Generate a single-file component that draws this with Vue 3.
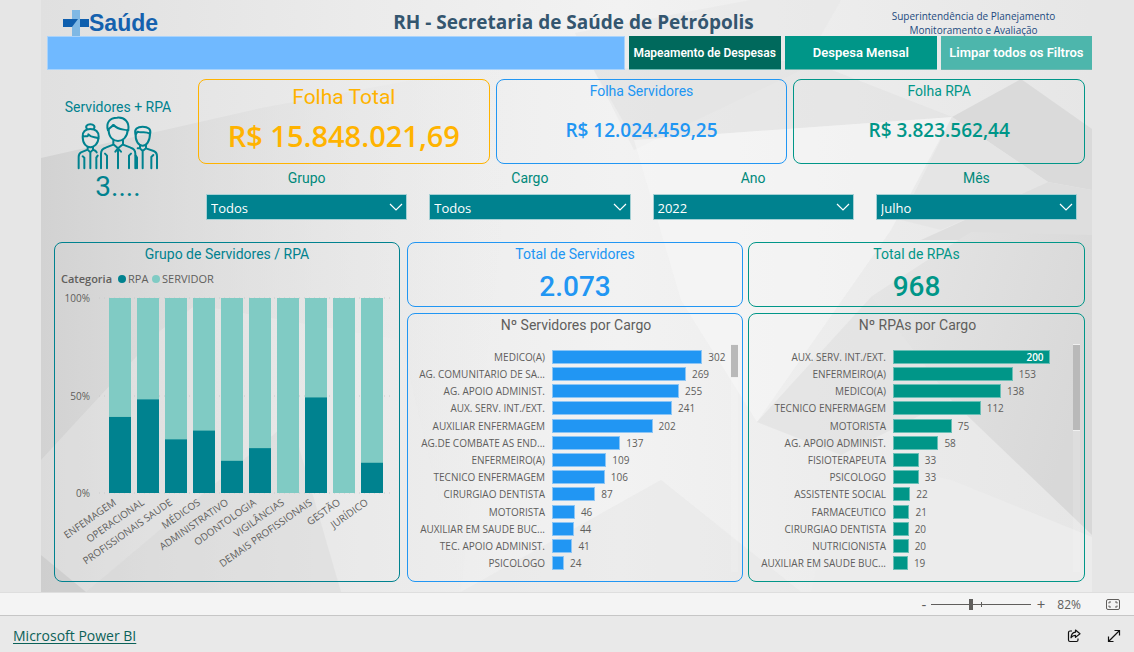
<script setup>
import { ref } from 'vue'

const payroll = [
  { title: 'Folha Total', value: 'R$ 15.848.021,69', tone: 'amber' },
  { title: 'Folha Servidores', value: 'R$ 12.024.459,25', tone: 'blue' },
  { title: 'Folha RPA', value: 'R$ 3.823.562,44', tone: 'green' },
]

const filters = ref([
  { id: 'grupo', label: 'Grupo', value: 'Todos' },
  { id: 'cargo', label: 'Cargo', value: 'Todos' },
  { id: 'ano', label: 'Ano', value: '2022' },
  { id: 'mes', label: 'Mês', value: 'Julho' },
])

const groups = [
  { name: 'ENFEMAGEM', rpa: 39 },
  { name: 'OPERACIONAL', rpa: 48 },
  { name: 'PROFISSIONAIS SAUDE', rpa: 27.5 },
  { name: 'MÉDICOS', rpa: 32 },
  { name: 'ADMINISTRATIVO', rpa: 16.5 },
  { name: 'ODONTOLOGIA', rpa: 23 },
  { name: 'VIGILÂNCIAS', rpa: 0 },
  { name: 'DEMAIS PROFISSIONAIS', rpa: 49 },
  { name: 'GESTÃO', rpa: 0 },
  { name: 'JURÍDICO', rpa: 15.5 },
]
const axis = [
  { label: '100%', y: 55 },
  { label: '50%', y: 153 },
  { label: '0%', y: 250 },
]
const barX = (i) => 54 + i * 28
const barH = (pct) => pct * 1.95

const roles = [
  {
    title: 'Nº Servidores por Cargo',
    totalTitle: 'Total de Servidores',
    total: '2.073',
    tone: 'blue',
    scale: 84 / 302,
    thumb: 'short',
    rows: [
      ['MEDICO(A)', 302], ['AG. COMUNITARIO DE SA...', 269], ['AG. APOIO ADMINIST.', 255],
      ['AUX. SERV. INT./EXT.', 241], ['AUXILIAR ENFERMAGEM', 202], ['AG.DE COMBATE AS END...', 137],
      ['ENFERMEIRO(A)', 109], ['TECNICO ENFERMAGEM', 106], ['CIRURGIAO DENTISTA', 87],
      ['MOTORISTA', 46], ['AUXILIAR EM SAUDE BUC...', 44], ['TEC. APOIO ADMINIST.', 41], ['PSICOLOGO', 24],
    ],
  },
  {
    title: 'Nº RPAs por Cargo',
    totalTitle: 'Total de RPAs',
    total: '968',
    tone: 'green',
    scale: 87 / 200,
    thumb: 'long',
    rows: [
      ['AUX. SERV. INT./EXT.', 200], ['ENFERMEIRO(A)', 153], ['MEDICO(A)', 138],
      ['TECNICO ENFERMAGEM', 112], ['MOTORISTA', 75], ['AG. APOIO ADMINIST.', 58],
      ['FISIOTERAPEUTA', 33], ['PSICOLOGO', 33], ['ASSISTENTE SOCIAL', 22],
      ['FARMACEUTICO', 21], ['CIRURGIAO DENTISTA', 20], ['NUTRICIONISTA', 20], ['AUXILIAR EM SAUDE BUC...', 19],
    ],
  },
]
const isInside = (c, v) => v * c.scale > 85
const zoom = ref(82)
</script>

<template>
  <div class="page">
    <main class="report">
      <svg class="backdrop" viewBox="0 0 1051 592" preserveAspectRatio="none" aria-hidden="true">
        <defs>
          <linearGradient id="base" x1="0" x2="1" y1="0" y2="0">
            <stop offset="0" stop-color="#e0e0e0" />
            <stop offset="0.3" stop-color="#ebebeb" />
            <stop offset="0.55" stop-color="#f2f2f2" />
            <stop offset="1" stop-color="#e6e6e6" />
          </linearGradient>
          <linearGradient id="shade" x1="0" x2="1" y1="0" y2="0">
            <stop offset="0" stop-color="#d2d2d2" />
            <stop offset="1" stop-color="#eaeaea" stop-opacity="0" />
          </linearGradient>
          <linearGradient id="shadeRight" x1="0" x2="1" y1="0" y2="0.4">
            <stop offset="0" stop-color="#e6e6e6" />
            <stop offset="1" stop-color="#d8d8d8" />
          </linearGradient>
        </defs>
        <rect width="1051" height="592" fill="url(#base)" />
        <path d="M0 158 220 108 480 60 420 592H0Z" fill="url(#shade)" />
        <path d="M0 460 120 330 155 305 360 340 420 592H0Z" fill="#eeeeee" opacity="0.35" />
        <path d="M0 555 45 592H0Z" fill="#bbbbbb" opacity="0.4" />
        <path d="M45 592 250 420 300 592Z" fill="#d2d2d2" opacity="0.3" />
        <path d="M534 33 710 0 800 0 760 70 593 150Z" fill="#e6e6e6" opacity="0.5" />
        <path d="M553 70 765 60 911 117 593 140Z" fill="#e0e0e0" opacity="0.5" />
        <path d="M593 140 911 117 850 230 716 422 640 300Z" fill="#f7f7f7" opacity="0.6" />
        <path d="M911 117 980 79 1051 129V190L1007 182Z" fill="#dadada" />
        <path d="M911 117 1007 182 900 230 860 220Z" fill="#e5e5e5" />
        <path d="M1007 182 1051 190V240L880 240Z" fill="#dedede" />
        <path d="M831 296 930 232 1051 235V535L910 400Z" fill="url(#shadeRight)" />
        <path d="M716 422 831 296 910 400 800 455Z" fill="#e0e0e0" opacity="0.6" />
        <path d="M800 455 910 480 1051 537V592H770Z" fill="#ececec" />
        <path d="M420 592 620 480 760 592Z" fill="#e6e6e6" opacity="0.5" />
      </svg>

      <div class="content">
        <header class="top">
          <div class="logo">
            <svg viewBox="0 0 26 26" aria-hidden="true">
              <path d="M9 0h8v26H9z" fill="#7fb8e4" />
              <path d="M0 9h15l-6 8H0zM17 9h9v8h-9z" fill="#0f5fae" />
            </svg>
            <span>Saúde</span>
          </div>
          <h1>RH - Secretaria de Saúde de Petrópolis</h1>
          <p>Superintendência de Planejamento<br />Monitoramento e Avaliação</p>
        </header>

        <nav class="nav">
          <div class="strip"></div>
          <button type="button" class="tab dark">Mapeamento de Despesas</button>
          <button type="button" class="tab">Despesa Mensal</button>
          <button type="button" class="tab light">Limpar todos os Filtros</button>
        </nav>

        <div class="body">
          <section class="summary">
            <div class="people">
              <h2>Servidores + RPA</h2>
              <svg viewBox="50 64 246 160" fill="none" stroke="#00828f" stroke-width="6" stroke-linecap="round" stroke-linejoin="round" aria-hidden="true">
                <path d="M145 105C145 128 160 138 173 138S201 128 202 105" />
                <path d="M143 106C136 84 148 68 170 68C192 66 208 80 204 106M143 106C145 98 152 100 158 90M160 90C172 104 184 102 202 106" />
                <path d="M159 136V148L173 160 188 148V136M159 148 173 160 165 170M188 148 173 160 182 170M173 162V220" />
                <path d="M122 220V176Q122 162 136 158L159 149M225 220V176Q225 162 211 158L188 149M140 220V182L134 176M206 220V182L212 176" />
                <path d="M67 125C67 148 80 157 90 157S114 148 115 125C115 110 105 102 90 102S66 110 67 125C76 122 84 128 84 118C94 130 104 124 115 130" />
                <path d="M80 102C74 94 80 88 90 88S106 94 100 102" />
                <path d="M82 157V164L90 172 98 164V157M90 172V220M82 164 62 172Q55 176 55 186V220M98 164 106 168 109 172M72 220V188L67 184M108 220V188L112 182" />
                <path d="M226 115C224 140 236 152 247 152S269 140 269 115" />
                <path d="M226 118C220 102 232 95 247 95S274 102 269 118M226 118 232 110C242 116 250 106 269 116" />
                <path d="M239 151V160L247 168 257 160V151M247 168V220M257 160 280 168Q290 172 290 184V220M239 160 232 160M273 220V186L279 180M230 220V188L226 182" />
              </svg>
              <strong>3....</strong>
            </div>

            <div class="kpis">
              <article v-for="(k, i) in payroll" :key="k.title" class="card kpi" :class="[k.tone, { major: i === 0 }]">
                <h2>{{ k.title }}</h2>
                <strong>{{ k.value }}</strong>
              </article>
            </div>

            <form class="filters">
              <div v-for="f in filters" :key="f.id" class="filter">
                <label :for="f.id">{{ f.label }}</label>
                <div class="select">
                  <select :id="f.id" v-model="f.value">
                    <option>{{ f.value }}</option>
                  </select>
                  <svg viewBox="0 0 14 8" aria-hidden="true"><path d="M1 1 7 7 13 1" fill="none" stroke="#fff" stroke-width="1.2" /></svg>
                </div>
              </div>
            </form>
          </section>

          <section class="charts">
            <article class="card teal stacked">
              <h2>Grupo de Servidores / RPA</h2>
              <svg viewBox="0 0 344 315" role="img" aria-label="Grupo de Servidores / RPA">
                <g class="legend">
                  <text x="6" y="17" class="strong">Categoria</text>
                  <circle cx="67" cy="13" r="4" fill="#00828f" />
                  <text x="73" y="17">RPA</text>
                  <circle cx="101" cy="13" r="4" fill="#80cbc4" />
                  <text x="107" y="17">SERVIDOR</text>
                </g>
                <g transform="translate(0 -23)">
                  <g v-for="a in axis" :key="a.label">
                    <line x1="44" x2="336" :y1="a.y" :y2="a.y" stroke="#cacaca" stroke-dasharray="1 4" />
                    <text x="35" :y="a.y + 4" class="tick" text-anchor="end">{{ a.label }}</text>
                  </g>
                  <g v-for="(g, i) in groups" :key="g.name">
                    <rect :x="barX(i)" y="55" width="22" height="195" fill="#80cbc4" />
                    <rect :x="barX(i)" :y="250 - barH(g.rpa)" width="22" :height="barH(g.rpa)" fill="#00828f" />
                    <text class="tick" text-anchor="end" :transform="`translate(${barX(i) + 8} 261) rotate(-35)`">{{ g.name }}</text>
                  </g>
                </g>
              </svg>
            </article>

            <div v-for="c in roles" :key="c.title" class="column">
              <article class="card total" :class="c.tone">
                <h2>{{ c.totalTitle }}</h2>
                <strong>{{ c.total }}</strong>
              </article>
              <article class="card ranking" :class="c.tone">
                <h2>{{ c.title }}</h2>
                <div class="plot">
                  <ul>
                    <li v-for="[name, v] in c.rows" :key="name">
                      <span class="name">{{ name }}</span>
                      <span class="track">
                        <span class="bar" :style="{ width: v * c.scale + '%' }"><b v-if="isInside(c, v)">{{ v }}</b></span>
                        <span v-if="!isInside(c, v)">{{ v }}</span>
                      </span>
                    </li>
                  </ul>
                  <div class="scroll"><div class="thumb" :class="c.thumb"></div></div>
                </div>
              </article>
            </div>
          </section>
        </div>
      </div>
    </main>

    <div class="zoombar">
      <button type="button" aria-label="Diminuir zoom">-</button>
      <input v-model="zoom" type="range" min="10" max="190" aria-label="Zoom" />
      <button type="button" aria-label="Aumentar zoom">+</button>
      <output>{{ zoom }}%</output>
      <button type="button" class="fit" aria-label="Ajustar à página">
        <svg viewBox="0 0 14 11" fill="none" stroke="#605e5c"><rect x=".5" y=".5" width="13" height="10" rx="1.5" /><path d="M3 4.5V3h2M9 3h2v1.5M11 6.5V8H9M5 8H3V6.5" /></svg>
      </button>
    </div>

    <footer class="footer">
      <a href="#">Microsoft Power BI</a>
      <div class="actions">
        <button type="button" aria-label="Compartilhar">
          <svg viewBox="0 0 14 14" fill="none" stroke="#111" stroke-width="1.2" stroke-linejoin="round"><path d="M5 2H3Q1.5 2 1.5 3.5V11Q1.5 12.5 3 12.5H9.5Q11 12.5 11 11V9.5" /><path d="M8.5 1 13 4.7 8.5 8.4V6.3Q5.5 6.2 4 8.8 4.3 3.6 8.5 3.2Z" /></svg>
        </button>
        <button type="button" aria-label="Tela cheia">
          <svg viewBox="0 0 14 14" fill="none" stroke="#111" stroke-width="1.2"><path d="M1.5 12.5 12.5 1.5M7.5 1.5h5v5M1.5 7.5v5h5" /></svg>
        </button>
      </div>
    </footer>
  </div>
</template>

<style>
body {
  background: #e9e9e9;
}
</style>

<style scoped>
.page {
  display: flex;
  flex-direction: column;
  min-height: 100vh;
  background: #e6e6e6;
  color: #605e5c;
  font-family: 'Open Sans', 'Noto Sans', sans-serif;
}
.page * {
  box-sizing: border-box;
}
h1,
h2,
p,
ul {
  margin: 0;
  padding: 0;
}
h2,
label {
  font: 400 14px/18px Roboto, sans-serif;
  text-align: center;
}
button {
  padding: 0;
  border: 0;
  background: none;
  cursor: pointer;
}
.report {
  position: relative;
  flex: 1;
  margin: 0 42px 0 41px;
  padding-left: 6px;
}
.backdrop {
  position: absolute;
  inset: 0;
  width: 100%;
  height: 100%;
}
.content {
  position: relative;
}
.top {
  display: grid;
  grid-template-columns: 245px 1fr 237px;
  height: 36px;
}
.logo {
  display: flex;
  align-items: center;
  padding: 8px 0 0 16px;
  color: #1561ae;
  font: 700 23px/26px 'Liberation Sans', sans-serif;
}
.logo svg {
  width: 26px;
  height: 26px;
}
h1 {
  padding-top: 9px;
  color: #34566f;
  font-size: 19px;
  font-weight: 700;
  line-height: 26px;
  text-align: center;
  white-space: nowrap;
}
.top p {
  padding-top: 9px;
  color: #1d4a80;
  font-size: 10px;
  line-height: 14px;
  text-align: center;
}
.nav {
  display: grid;
  grid-template-columns: 577fr 152fr 152fr 151fr;
  gap: 4px;
  height: 34px;
}
.strip {
  border: 1px solid #a9d3fb;
  background: #70b9ff;
}
.tab {
  border-bottom: 1px solid #6fb9b2;
  background: #009688;
  color: #fff;
  font: 600 13px/16px Roboto, sans-serif;
  white-space: nowrap;
}
.tab.dark {
  background: #00695c;
  font-size: 12px;
}
.tab.light {
  background: #4db6ac;
}
.body {
  padding: 9px 7px 10px;
}
.summary {
  display: grid;
  grid-template-columns: 128px 1fr;
  column-gap: 16px;
}
.people {
  grid-row: span 2;
  display: flex;
  flex-direction: column;
  align-items: center;
  padding-top: 19px;
  color: #00828f;
}
.people svg {
  width: 82px;
  height: 54px;
}
.people strong {
  font: 400 28px/34px Roboto, sans-serif;
}
.kpis {
  display: grid;
  grid-template-columns: repeat(3, 1fr);
  gap: 6px;
}
.card {
  border: 1px solid currentColor;
  border-radius: 8px;
}
.amber {
  color: #ffb300;
}
.blue {
  color: #2196f3;
}
.green {
  color: #009688;
}
.teal {
  color: #00828f;
}
.kpi {
  height: 85px;
  padding-top: 2px;
  text-align: center;
}
.kpi strong {
  display: block;
  padding-top: 16px;
  font-size: 19px;
  font-weight: 600;
  line-height: 28px;
}
.kpi.major h2 {
  font-size: 21px;
  line-height: 30px;
}
.kpi.major strong {
  padding-top: 4px;
  font-size: 29px;
  line-height: 40px;
}
.filters {
  display: grid;
  grid-template-columns: repeat(4, 1fr);
  gap: 22px;
  padding: 5px 8px 0;
}
.filter label {
  display: block;
  color: #00897b;
}
.select {
  position: relative;
  margin-top: 7px;
}
.select select {
  display: block;
  width: 100%;
  height: 26px;
  padding: 2px 4px 0;
  border: 1px solid #a5d0d4;
  border-radius: 0;
  appearance: none;
  background: #00828f;
  color: #fff;
  font: 400 13px/18px 'Open Sans', sans-serif;
}
.select svg {
  position: absolute;
  top: 9px;
  right: 4px;
  width: 14px;
  height: 8px;
  pointer-events: none;
}
.charts {
  display: grid;
  grid-template-columns: 348fr 336fr 337fr;
  gap: 5px;
  padding-top: 22px;
}
.stacked {
  margin-right: 2px;
  padding-top: 2px;
}
.stacked svg {
  display: block;
  width: 100%;
  margin-top: 3px;
  fill: #605e5c;
}
.legend text {
  font-size: 11px;
}
.legend .strong {
  font-weight: 600;
}
.tick {
  font-size: 10px;
}
.column {
  display: flex;
  flex-direction: column;
  gap: 6px;
}
.total {
  height: 65px;
  padding-top: 2px;
  text-align: center;
}
.total strong {
  display: block;
  padding-top: 6px;
  font: 500 28px/36px Roboto, sans-serif;
}
.ranking {
  flex: 1;
  display: flex;
  flex-direction: column;
  padding: 2px 4px 9px 6px;
}
.ranking h2 {
  color: #605e5c;
}
.plot {
  flex: 1;
  display: flex;
  margin-top: 10px;
}
.plot ul {
  flex: 1;
  display: grid;
  grid-auto-rows: 1fr;
  padding-top: 4px;
  list-style: none;
}
li {
  display: flex;
  align-items: center;
  gap: 7px;
  color: #605e5c;
  font-size: 10px;
  line-height: 14px;
}
.name {
  width: 131px;
  text-align: right;
  white-space: nowrap;
}
.track {
  flex: 1;
  display: flex;
  align-items: center;
  gap: 6px;
}
.bar {
  flex: none;
  height: 14px;
  border: 1px solid #8cc5f5;
  background: #2196f3;
  color: #fff;
  text-align: right;
}
.green .bar {
  border-color: #6abfb6;
  background: #009688;
}
.bar b {
  display: block;
  padding-right: 5px;
  font-weight: 600;
  line-height: 12px;
}
.scroll {
  width: 7px;
  background: #ffffff22;
}
.thumb {
  border: 1px solid #f0f0f0;
  border-width: 1px 0;
  background: #b9b9b9;
}
.thumb.short {
  height: 34px;
}
.thumb.long {
  height: 87px;
}
.zoombar {
  display: flex;
  align-items: center;
  justify-content: flex-end;
  height: 24px;
  padding-right: 14px;
  border-top: 1px solid #dedede;
  border-bottom: 1px solid #c6c6c6;
  background: #f4f4f4;
  font-size: 12px;
}
.zoombar button {
  width: 14px;
  color: #605e5c;
  font: 400 15px/20px 'Open Sans', sans-serif;
}
.zoombar input {
  width: 100px;
  height: 12px;
  margin: 0 3px 0 0;
  appearance: none;
  background:
    linear-gradient(#605e5c, #605e5c) 50px 50% / 1px 5px no-repeat,
    linear-gradient(#605e5c, #605e5c) 0 50% / 100% 1px no-repeat;
}
.zoombar input::-webkit-slider-thumb {
  width: 4px;
  height: 11px;
  appearance: none;
  background: #605e5c;
}
.zoombar output {
  width: 33px;
  text-align: right;
}
.zoombar .fit {
  display: flex;
  width: 14px;
  margin-left: 25px;
}
.fit svg {
  width: 14px;
  height: 11px;
}
.footer {
  display: flex;
  align-items: center;
  justify-content: space-between;
  height: 36px;
  padding: 4px 13px 0;
  background: #e9e9e9;
}
.footer a {
  color: #0b6158;
  font-size: 14px;
  line-height: 18px;
  text-underline-offset: 2px;
}
.actions {
  display: flex;
  gap: 26px;
}
.actions svg {
  display: block;
  width: 14px;
  height: 14px;
}
</style>
